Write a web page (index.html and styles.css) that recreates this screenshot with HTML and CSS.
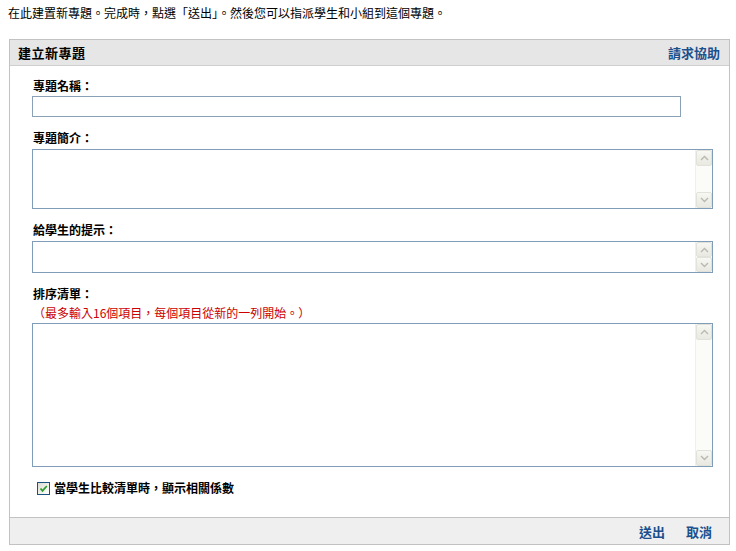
FILE: index.html
```html
<!DOCTYPE html>
<html lang="zh-Hant">
<head>
<meta charset="utf-8">
<title>建立新專題</title>
<link rel="stylesheet" href="styles.css">
</head>
<body>
<div class="intro">在此建置新專題。完成時，點選「送出」。然後您可以指派學生和小組到這個專題。</div>
<div class="panel">
  <div class="panel-head">
    <span class="panel-title">建立新專題</span>
    <a class="link" href="#">請求協助</a>
  </div>
  <div class="panel-body">
    <div class="label first">專題名稱：</div>
    <input class="text-input" type="text">

    <div class="label">專題簡介：</div>
    <div class="ta-box ta-1">
      <textarea class="ta"></textarea>
      <div class="sb">
        <div class="sb-btn"><svg viewBox="0 0 9 6" width="9" height="6"><path d="M1 5 L4.5 1.5 L8 5" fill="none" stroke="#b9b9ae" stroke-width="1.4"/></svg></div>
        <div class="sb-track"></div>
        <div class="sb-btn"><svg viewBox="0 0 9 6" width="9" height="6"><path d="M1 1 L4.5 4.5 L8 1" fill="none" stroke="#b9b9ae" stroke-width="1.4"/></svg></div>
      </div>
    </div>

    <div class="label">給學生的提示：</div>
    <div class="ta-box ta-2">
      <textarea class="ta"></textarea>
      <div class="sb">
        <div class="sb-btn"><svg viewBox="0 0 9 6" width="9" height="6"><path d="M1 5 L4.5 1.5 L8 5" fill="none" stroke="#b9b9ae" stroke-width="1.4"/></svg></div>
        <div class="sb-btn"><svg viewBox="0 0 9 6" width="9" height="6"><path d="M1 1 L4.5 4.5 L8 1" fill="none" stroke="#b9b9ae" stroke-width="1.4"/></svg></div>
      </div>
    </div>

    <div class="label">排序清單：</div>
    <div class="note">（最多輸入16個項目，每個項目從新的一列開始。）</div>
    <div class="ta-box ta-3">
      <textarea class="ta"></textarea>
      <div class="sb">
        <div class="sb-btn"><svg viewBox="0 0 9 6" width="9" height="6"><path d="M1 5 L4.5 1.5 L8 5" fill="none" stroke="#b9b9ae" stroke-width="1.4"/></svg></div>
        <div class="sb-track"></div>
        <div class="sb-btn"><svg viewBox="0 0 9 6" width="9" height="6"><path d="M1 1 L4.5 4.5 L8 1" fill="none" stroke="#b9b9ae" stroke-width="1.4"/></svg></div>
      </div>
    </div>

    <label class="check-row">
      <span class="check"><svg viewBox="0 0 11 11" width="11" height="11"><path d="M2.5 5.5 L4.5 7.8 L8.8 3" fill="none" stroke="#2f9e2f" stroke-width="1.8"/></svg></span>
      <span class="check-text">當學生比較清單時，顯示相關係數</span>
    </label>
  </div>
  <div class="panel-foot">
    <a class="link" href="#">送出</a>
    <a class="link" href="#">取消</a>
  </div>
</div>
</body>
</html>
```

FILE: styles.css
```css
* { box-sizing: border-box; }

body {
  margin: 0;
  background: #ffffff;
  font-family: "Noto Sans CJK TC", "Noto Sans CJK SC", sans-serif;
  font-size: 12px;
  color: #000;
}

.intro {
  padding: 5px 8px 0 8px;
  line-height: 16px;
  height: 21px;
}

.panel {
  margin: 18px 0 0 9px;
  width: 721px;
  border: 1px solid #c2c2c2;
}

.panel-head {
  height: 26px;
  background: #e6e6e6;
  border-bottom: 1px solid #cfcfcf;
  display: flex;
  align-items: center;
  justify-content: space-between;
  padding: 0 9px 0 8px;
}

.panel-title {
  font-size: 13px;
  font-weight: bold;
  letter-spacing: 0.5px;
}

.link {
  font-size: 13px;
  font-weight: bold;
  color: #1b4f8e;
  text-decoration: none;
}

.panel-body {
  padding: 12px 0 21px 22px;
}

.label {
  font-weight: bold;
  line-height: 16px;
  height: 16px;
  margin: 13px 0 3px 1px;
}

.label.first { margin-top: 0; margin-bottom: 2px; }

.text-input {
  display: block;
  width: 649px;
  height: 21px;
  border: 1px solid #8aa1b8;
  margin: 0;
  padding: 0 2px;
  background: #fff;
}

.ta-box {
  display: flex;
  width: 681px;
  border: 1px solid #7f9db9;
  background: #fff;
}

.ta-1 { height: 60px; }
.ta-2 { height: 32px; }
.ta-3 { height: 144px; }

.ta {
  flex: 1;
  border: none;
  resize: none;
  overflow: hidden;
  margin: 0;
  padding: 2px;
  font: inherit;
  outline: none;
}

.sb {
  width: 17px;
  display: flex;
  flex-direction: column;
  background: #fbfbf8;
  border-left: 1px solid #f0f0ea;
}

.sb-track { flex: 1; }

.sb-btn {
  height: 15px;
  border: 1px solid #e2e2da;
  border-radius: 2px;
  background: linear-gradient(#f7f7f3, #e9e9e2);
  display: flex;
  align-items: center;
  justify-content: center;
}

.ta-1 .sb-btn, .ta-3 .sb-btn { height: 16px; }

.note {
  color: #cc0000;
  line-height: 16px;
  height: 16px;
  overflow: hidden;
  margin: 0 0 2px 1px;
}

.check-row {
  display: flex;
  align-items: center;
  gap: 4px;
  margin: 13px 0 0 5px;
  height: 16px;
}

.check {
  width: 13px;
  height: 13px;
  border: 1px solid #1c5180;
  background: linear-gradient(135deg, #dcdcd5, #ffffff);
  display: flex;
  align-items: center;
  justify-content: center;
}

.check-text {
  font-weight: bold;
  line-height: 16px;
}

.panel-foot {
  height: 27px;
  background: #efefef;
  border-top: 1px solid #c2c2c2;
  display: flex;
  align-items: center;
  justify-content: flex-end;
  gap: 21px;
  padding: 0 17px 0 0;
}
```
